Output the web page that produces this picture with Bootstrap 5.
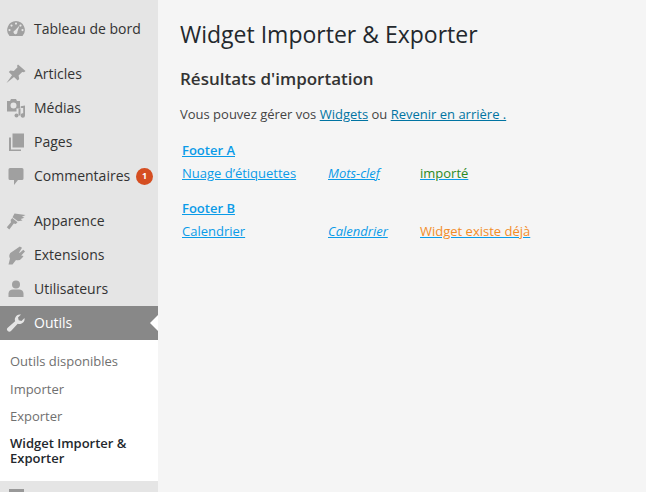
<!DOCTYPE html>
<html lang="fr">
<head>
  <meta charset="UTF-8">
  <meta name="viewport" content="width=device-width, initial-scale=1.0">
  <title>Widget Importer &amp; Exporter</title>
  <link href="https://cdn.jsdelivr.net/npm/bootstrap@5.3.2/dist/css/bootstrap.min.css" rel="stylesheet">
  <style>
    html, body { height: 492px; overflow: hidden; }
    body {
      background: #f5f5f5;
      color: #444;
      font-family: "Open Sans", sans-serif;
      font-size: 13px;
    }
    .side-menu { width: 158px; height: 492px; background: #e5e5e5; flex: none; overflow: hidden; padding-top: 12px; }
    .menu-entry { height: 34px; padding-bottom: 2px; font-size: 14px; color: #333; gap: 8px; padding-left: 6px; text-decoration: none; position: relative; }
    .menu-entry svg { width: 20px; height: 20px; fill: #a0a0a0; flex: none; margin-top: 2px; }
    .menu-gap { height: 11px; }
    .menu-entry.is-current { background: #888; color: #fff; }
    .menu-entry.is-current svg { fill: #e5e5e5; }
    .menu-entry.is-current::after {
      content: ""; position: absolute; right: 0; top: 9px;
      border: 8px solid transparent; border-right-color: #fff; border-left-width: 0;
    }
    .count-dot {
      width: 17px; height: 17px; border-radius: 50%; background: #d54e21; color: #fff;
      font-size: 9px; font-weight: 700; margin-left: -2px; margin-top: 2px;
    }
    .sub-menu { background: #fff; height: 141px; padding: 13px 10px 0; }
    .sub-menu a { display: block; color: #707070; text-decoration: none; line-height: 16px; margin-bottom: 11.5px; }
    .sub-menu a.is-active { color: #23282d; font-weight: 600; line-height: 15.5px; }
    .side-last { padding: 8px 0 0 9px; }
    .side-last span { display: block; width: 15px; height: 10px; background: #999; }
    .page-body { padding: 0 0 0 22px; flex: 1; }
    .page-title { font-size: 23px; font-weight: 400; color: #23282d; line-height: 29px; margin: 20px 0 0; }
    .page-sub { font-size: 17px; font-weight: 600; color: #333; line-height: 22px; margin: 19px 0 0; }
    .page-note { line-height: 18px; margin: 15px 0 0; }
    .page-note a { color: #0074a2; }
    .result-list { margin: 18px 0 0 2px; }
    .result-list a, .result-list .col-a, .result-list .col-b, .result-list .col-c { color: #0a9be8; text-decoration: underline; }
    .result-head { font-weight: 600; line-height: 18px; }
    .result-row { line-height: 18px; margin: 5px 0 17px; }
    .col-a { width: 146px; }
    .col-b { width: 92px; font-style: italic; }
    .col-c { flex: none; }
    .tone-ok { color: #2b8a1e; }
    .tone-warn { color: #f28c28; }
  </style>
</head>
<body>
  <div class="d-flex">
    <nav class="side-menu">
      <a class="menu-entry d-flex align-items-center" href="#">
        <svg viewBox="0 0 20 20"><path fill-rule="evenodd" d="M3.500 17A9 9 0 0 1 10 2a9 9 0 0 1 6.500 15zM10 3.500a1.100 1.100 0 1 0 0 2.200 1.100 1.100 0 0 0 0-2.200zM5.500 5.500a1.100 1.100 0 1 0 0 2.200 1.100 1.100 0 0 0 0-2.200zM14.500 5.500a1.100 1.100 0 1 0 0 2.200 1.100 1.100 0 0 0 0-2.200zM3.500 10a1.100 1.100 0 1 0 0 2.200 1.100 1.100 0 0 0 0-2.200zM16.500 10a1.100 1.100 0 1 0 0 2.200 1.100 1.100 0 0 0 0-2.200zM13.500 6.500l-4.600 5a1.900 1.900 0 1 0 2.400 1.400z"/></svg>
        Tableau de bord
      </a>
      <div class="menu-gap"></div>
      <a class="menu-entry d-flex align-items-center" href="#">
        <svg viewBox="0 0 20 20"><path d="M12 .5l7.500 6.500-1.500 1.300-1.800-.4-3.600 3.700.6 3.400-1.500 1.500-3.700-3.600L.5 19l5.500-7.800-3.200-3.100 1.500-1.500 3.500.5L11.500 3.300 11 1.700z"/></svg>
        Articles
      </a>
      <a class="menu-entry d-flex align-items-center" href="#">
        <svg viewBox="0 0 20 20"><path fill-rule="evenodd" d="M1 3h3l1-2h5l1 2h3v7.500h-3.500v3H1zM7.500 4.500a3 3 0 1 0 0 6 3 3 0 0 0 0-6z"/><path d="M19 7.500v10a2.200 2.200 0 1 1-1.800-2.200V10h-2.500V8.200z" /><circle cx="10.500" cy="17.500" r="2"/><path d="M12.500 10.500h2v7h-2z"/></svg>
        Médias
      </a>
      <a class="menu-entry d-flex align-items-center" href="#">
        <svg viewBox="0 0 20 20"><path d="M6.500 1.500H18v14H6.500zM3 5.500h2v12h10V19H3z"/></svg>
        Pages
      </a>
      <a class="menu-entry d-flex align-items-center" href="#">
        <svg viewBox="0 0 20 20"><path d="M4 2h12a1.500 1.500 0 0 1 1.500 1.500v9A1.500 1.500 0 0 1 16 14h-4l-4 5v-5H4a1.500 1.500 0 0 1-1.500-1.500v-9A1.500 1.500 0 0 1 4 2z"/></svg>
        Commentaires
        <span class="count-dot d-flex align-items-center justify-content-center">1</span>
      </a>
      <div class="menu-gap"></div>
      <a class="menu-entry d-flex align-items-center" href="#">
        <svg viewBox="0 0 20 20"><path d="M8.500 2.500L19.500 4l-3.500 1.800 2.500 1-3.800 1.200 1.800 1.500-4.500.8-5.500-4zM6.300 7l5.200 4.300-1.700 1.700-2-.6L3.300 18.500.8 16.300 5 11.200 4.600 9z"/></svg>
        Apparence
      </a>
      <a class="menu-entry d-flex align-items-center" href="#">
        <svg viewBox="0 0 20 20"><path d="M13.800 1.500l2.200 1.200-3 5h.8l3.500-3 1.700 1.800-3.800 4 2.300.5-1 1.500a6 6 0 0 1-6.500 2.500L6.500 19.500H2.500l1.500-6C2.800 11.500 3.200 9.500 4.300 8z"/></svg>
        Extensions
      </a>
      <a class="menu-entry d-flex align-items-center" href="#">
        <svg viewBox="0 0 20 20"><circle cx="10" cy="5.500" r="4"/><path d="M2.500 18v-3.500c0-2.500 2-4 4.500-4h6c2.500 0 4.500 1.500 4.500 4V18z"/></svg>
        Utilisateurs
      </a>
      <a class="menu-entry is-current d-flex align-items-center" href="#">
        <svg viewBox="0 0 20 20"><path d="M18.500 5a5.200 5.200 0 0 1-6.800 5.800L5 18a2.300 2.300 0 0 1-3.300-3.300l7.400-6.400A5.200 5.200 0 0 1 15 1.500l-3 3 .7 2.800 2.800.7z"/></svg>
        Outils
      </a>
      <div class="sub-menu">
        <a href="#">Outils disponibles</a>
        <a href="#">Importer</a>
        <a href="#">Exporter</a>
        <a class="is-active" href="#">Widget Importer &amp; Exporter</a>
      </div>
      <div class="side-last"><span></span></div>
    </nav>
    <main class="page-body">
      <h1 class="page-title">Widget Importer &amp; Exporter</h1>
      <h3 class="page-sub">Résultats d'importation</h3>
      <p class="page-note">Vous pouvez gérer vos <a href="#">Widgets</a> ou <a href="#">Revenir en arrière .</a></p>
      <div class="result-list">
        <div class="result-head"><a href="#">Footer A</a></div>
        <div class="result-row d-flex">
          <div class="col-a">Nuage d’étiquettes</div>
          <div class="col-b">Mots-clef</div>
          <div class="col-c"><span class="tone-ok">importé</span></div>
        </div>
        <div class="result-head"><a href="#">Footer B</a></div>
        <div class="result-row d-flex">
          <div class="col-a">Calendrier</div>
          <div class="col-b">Calendrier</div>
          <div class="col-c"><span class="tone-warn">Widget existe déjà</span></div>
        </div>
      </div>
    </main>
  </div>
  <script src="https://cdn.jsdelivr.net/npm/bootstrap@5.3.2/dist/js/bootstrap.bundle.min.js"></script>
</body>
</html>
